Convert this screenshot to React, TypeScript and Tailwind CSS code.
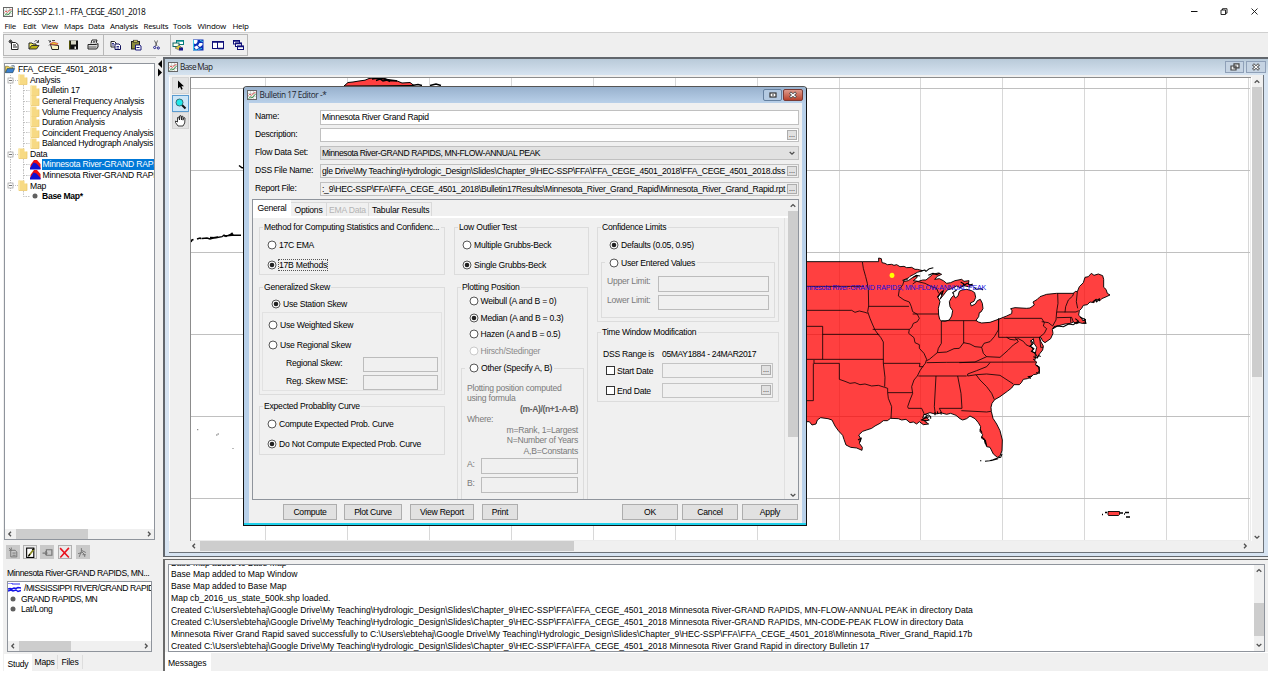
import type { ReactNode } from "react";

/* ---------- shared bits ---------- */

function ChartIcon({ className = "" }: { className?: string }) {
  return (
    <svg viewBox="0 0 10 10" className={`h-[10px] w-[10px] shrink-0 ${className}`}>
      <rect x="0.5" y="0.5" width="9" height="9" fill="#f6f8f6" stroke="#666" />
      <path d="M1 3.500h8M1 6.500h8M3.500 1v8M6.500 1v8" stroke="#bcc4bc" strokeWidth="0.600" />
      <path d="M1.500 8.500L3.500 7l1.500 1 3.500-4" stroke="#2d8a3c" strokeWidth="0.900" fill="none" />
      <path d="M1.500 5.500L3 4l1.500 1.500L6.500 3l2-.5" stroke="#d44" strokeWidth="0.800" fill="none" />
    </svg>
  );
}

function Chevron({ dir }: { dir: "up" | "down" | "left" | "right" }) {
  const d = {
    up: "M1.700 4.800L4 2.600l2.300 2.200",
    down: "M1.700 3L4 5.200l2.300-2.200",
    left: "M5 1.700L2.800 4l2.200 2.300",
    right: "M3 1.700L5.200 4l-2.200 2.300",
  }[dir];
  return (
    <svg viewBox="0 0 8 8" className="h-2 w-2 shrink-0">
      <path d={d} fill="none" stroke="#505050" strokeWidth="1.300" />
    </svg>
  );
}

function Folder() {
  return (
    <svg viewBox="0 0 10 11" className="-mt-px h-[11px] w-[10px] shrink-0">
      <path d="M0.500 0.500h6v3h2.500v7H0.500z" fill="#f7da84" />
      <path d="M0.500 0.500h1.500v10H0.500z" fill="#fbe7a6" />
      <path d="M9 3.500v7H1" fill="none" stroke="#e9c566" strokeWidth="0.700" />
    </svg>
  );
}

function Dot() {
  return (
    <svg viewBox="0 0 6 6" className="h-1.5 w-1.5 shrink-0">
      <circle cx="3" cy="3" r="2.500" fill="#606060" />
    </svg>
  );
}

/* ---------- top bar ---------- */

const MENUS: [string, string][] = [
  ["File", "w-[18.500px]"],
  ["Edit", "w-[18.500px]"],
  ["View", "w-[22.500px]"],
  ["Maps", "w-[24px]"],
  ["Data", "w-[22px]"],
  ["Analysis", "w-[33.500px]"],
  ["Results", "w-[29.500px]"],
  ["Tools", "w-[24.500px]"],
  ["Window", "w-[35px]"],
  ["Help", "w-[20px]"],
];

function ToolIcon({ children, className = "" }: { children: ReactNode; className?: string }) {
  return (
    <svg viewBox="0 0 12 12" className={`h-3 w-3 shrink-0 ${className}`} fill="none" strokeWidth="1">
      {children}
    </svg>
  );
}

function Toolbar() {
  return (
    <div className="flex h-[25px] bg-[#efefef] pt-px">
      <div className="flex h-[22px] w-[101px] items-center gap-[7.800px] border border-[#b8b8b8] pl-[4px]">
        <ToolIcon>
          <path d="M3.500 3.500h4l2.500 2v5h-6.500zM5 6h3M5 8h4" stroke="#222" fill="#fff" />
          <path d="M2.500 0.500v4M0.500 2.500h4M1 1l3 3M4 1l-3 3" stroke="#333" strokeWidth="0.800" />
        </ToolIcon>
        <ToolIcon>
          <path d="M1 10V4h3l1 1h3v2" stroke="#222" fill="#f3ee58" />
          <path d="M1 10l2.500-3.500H11L8.500 10z" stroke="#333" fill="#b8b010" />
          <path d="M6.500 2.500c1-1.500 3-1 3.500.5M10.500 1v2.500H8.500" stroke="#222" strokeWidth="0.800" />
        </ToolIcon>
        <ToolIcon>
          <path d="M2.500 5.500L10.500 6.500V10.500H4z" stroke="#222" fill="#fbf6c4" />
          <path d="M2 5l7 .8 1-1.300-5-1.500z" fill="#e8d030" stroke="#c33" strokeWidth="0.700" />
          <path d="M0.500 1l2 2M2.500 3V1.500M2.500 3H1M2.500 5L1 6.500M4 1.500h3" stroke="#222" strokeWidth="0.800" />
        </ToolIcon>
        <ToolIcon>
          <rect x="2" y="1.500" width="9" height="9" fill="#111" />
          <rect x="4" y="1.500" width="5" height="4" fill="#d9d9c8" />
          <path d="M2.700 2v8" stroke="#6b6b00" strokeWidth="0.900" />
          <rect x="7.500" y="7.500" width="1.500" height="2.500" fill="#eee" />
        </ToolIcon>
        <ToolIcon>
          <path d="M4 4.500L5 1h5L9 4.500" stroke="#222" fill="#fff" />
          <path d="M1 5.500h8.500l1.500-1v3.500l-1.500 2H1z" stroke="#222" fill="#ddd" />
          <path d="M1.500 8h8M6 2.500h2.500M5.500 3.700h2.500" stroke="#222" strokeWidth="0.700" />
        </ToolIcon>
      </div>
      <div className="flex h-[22px] w-[67px] items-center gap-[7.800px] border border-l-0 border-[#b8b8b8] pl-[6px]">
        <ToolIcon>
          <path d="M1 2.500h3.500l1.500 1.500v4H1z" stroke="#222" fill="#fff" />
          <path d="M5 5h4l1.500 1.500v4H5z" stroke="#10105a" fill="#fff" />
          <path d="M6.500 7.500h2.500M6.500 9h2.500M2 4.500h2M2 6h2" stroke="#1a1a7a" strokeWidth="0.900" />
        </ToolIcon>
        <ToolIcon>
          <rect x="1.500" y="2.500" width="8" height="7.500" fill="#8b8a3a" stroke="#222" />
          <rect x="3.500" y="1.200" width="4" height="2" fill="#d9d060" stroke="#222" strokeWidth="0.600" />
          <path d="M5.500 6h4l1.500 1v4H5.500z" stroke="#1a1a7a" fill="#fff" />
          <path d="M6.500 8.500h3" stroke="#1a1a7a" />
        </ToolIcon>
        <ToolIcon>
          <path d="M4.500 1.500l2.500 5.500M7.500 1.500L5.500 7" stroke="#555" strokeWidth="0.900" />
          <circle cx="4.700" cy="8.500" r="1.100" stroke="#1a1a8a" />
          <circle cx="8.300" cy="9" r="1.100" stroke="#1a1a8a" />
        </ToolIcon>
      </div>
      <div className="flex h-[22px] w-[77px] items-center gap-[7.800px] border border-l-0 border-[#b8b8b8] pl-[1px]">
        <ToolIcon>
          <rect x="4.500" y="1.500" width="7" height="4" fill="#fff" stroke="#067a7a" />
          <path d="M4.500 2h7" stroke="#078f8f" strokeWidth="1.500" />
          <rect x="1" y="4" width="6" height="3.500" fill="#ffe" stroke="#0a6a6a" />
          <path d="M3 9l4-3 3 3-3 2z" fill="#d8c840" stroke="#555" strokeWidth="0.600" />
          <path d="M7 8.500h4v3H7z" fill="#16168a" />
        </ToolIcon>
        <ToolIcon>
          <rect x="1" y="0.500" width="10.500" height="11" fill="#0a2fb8" />
          <path d="M1.500 1h4v2l-1.500 2-2.500-.5zM7.500 4h3v2L8 8 6 6.500zM2 8l3-1.500 2 2.500-3 1.500z" fill="#fff" />
          <path d="M1.500 1v10h4M8 1.500l3 1M6 10.500l4-1" stroke="#3cc6e8" />
        </ToolIcon>
        <ToolIcon className="ml-[0.500px]">
          <rect x="0.500" y="2.500" width="5" height="7" fill="#fff" stroke="#10107a" />
          <rect x="5.500" y="2.500" width="6" height="7" fill="#fff" stroke="#10107a" />
          <path d="M0.500 3h11M6 9.500h5.500" stroke="#10107a" strokeWidth="1.600" />
        </ToolIcon>
        <ToolIcon>
          <rect x="1.500" y="1.500" width="6" height="3.500" fill="#fff" stroke="#10107a" />
          <rect x="3.500" y="4" width="6" height="3.500" fill="#fff" stroke="#10107a" />
          <rect x="5.500" y="7" width="6" height="3.500" fill="#fff" stroke="#10107a" />
          <path d="M1.500 2h6M3.500 4.500h6M5.500 7.500h6" stroke="#10107a" strokeWidth="1.300" />
        </ToolIcon>
      </div>
    </div>
  );
}

/* ---------- left side ---------- */

function TreeRow({ depth, kind, children, selected, bold, last }: {
  depth: 0 | 1 | 2;
  kind: "folder" | "data" | "dot" | "root";
  children: string;
  selected?: boolean;
  bold?: boolean;
  last?: boolean;
}) {
  return (
    <div className="flex h-[10.580px] items-center">
      {depth === 1 && (
        <svg viewBox="0 0 13 11" className="h-[11px] w-[13px] shrink-0">
          <path d="M5.500 0v11M8 5.500h5" stroke="#999" strokeWidth="0.600" strokeDasharray="1 1" />
          <rect x="3" y="3" width="5" height="5" fill="#fff" stroke="#999" strokeWidth="0.700" />
          <path d="M4 5.500h3" stroke="#333" strokeWidth="0.700" />
        </svg>
      )}
      {depth === 2 && (
        <svg viewBox="0 0 25 11" className="h-[11px] w-[25px] shrink-0">
          <path d={last ? "M18.500 0v5.500h6" : "M5.500 0v11M18.500 0v11M18.500 5.500h6"} fill="none" stroke="#aaa" strokeWidth="0.700" strokeDasharray="1.500 1" />
        </svg>
      )}
      {kind === "root" && (
        <svg viewBox="0 0 12 10" className="h-[10px] w-[11px] shrink-0">
          <path d="M0.500 9V2h3l1 1h4v2" fill="#f3d25c" stroke="#5a5a20" strokeWidth="0.600" />
          <path d="M0.500 9L2.500 4.500h8L8.500 9z" fill="#3a7fd0" stroke="#134" strokeWidth="0.600" />
          <path d="M7 1.500h3v2" stroke="#246" strokeWidth="0.800" fill="none" />
        </svg>
      )}
      {kind === "folder" && <Folder />}
      {kind === "data" && (
        <svg viewBox="0 0 11 11" className="-mt-px h-[11px] w-[11px] shrink-0">
          <path d="M0.500 10V6L4 1 7 1l3.500 4V10z" fill="#f01010" />
          <path d="M0 10.500V9L3.500 3.500l3 1 4 4.500v1.500z" fill="#1010d0" />
        </svg>
      )}
      {kind === "dot" && <span className="flex w-[10px] justify-center"><Dot /></span>}
      <span
        className={`h-[10.500px] leading-[10.500px] ${kind === "data" ? "ml-px pl-[0.500px]" : "ml-px pl-px"} ${selected ? "bg-[#0078d7] text-white" : ""} ${bold ? "font-bold tracking-[-0.300px]" : ""}`}
      >
        {children}
      </span>
    </div>
  );
}

function HScroll({ thumb, className = "" }: { thumb: string; className?: string }) {
  return (
    <div className={`flex h-[10px] items-center justify-between bg-[#f0f0f0] px-[1px] ${className}`}>
      <div className="flex h-full items-center gap-[2px]">
        <Chevron dir="left" />
        <div className={`h-full bg-[#cdcdcd] ${thumb}`} />
      </div>
      <Chevron dir="right" />
    </div>
  );
}

function MiniButton({ children, off }: { children: ReactNode; off?: boolean }) {
  return (
    <div className={`flex h-[14px] w-[14px] items-center justify-center ${off ? "bg-[#c9c9c9]" : "border border-[#b0b0b0] bg-[#e9e9e9]"}`}>
      <svg viewBox="0 0 10 10" className="h-[11px] w-[11px] shrink-0" fill="none">{children}</svg>
    </div>
  );
}

function LeftPane() {
  return (
    <div className="flex w-[153px] shrink-0 flex-col border-t border-[#c4c4c4] bg-[#f0f0f0] pl-px">
      <div className="mt-[5px] flex h-[477px] w-[151px] flex-col border border-[#8f949c] bg-white">
        <div className="h-[466px] overflow-hidden pt-[0.200px] tracking-[-0.210px]">
          <TreeRow depth={0} kind="root">FFA_CEGE_4501_2018 *</TreeRow>
          <TreeRow depth={1} kind="folder">Analysis</TreeRow>
          <TreeRow depth={2} kind="folder">Bulletin 17</TreeRow>
          <TreeRow depth={2} kind="folder">General Frequency Analysis</TreeRow>
          <TreeRow depth={2} kind="folder">Volume Frequency Analysis</TreeRow>
          <TreeRow depth={2} kind="folder">Duration Analysis</TreeRow>
          <TreeRow depth={2} kind="folder">Coincident Frequency Analysis</TreeRow>
          <TreeRow depth={2} kind="folder">Balanced Hydrograph Analysis</TreeRow>
          <TreeRow depth={1} kind="folder">Data</TreeRow>
          <TreeRow depth={2} kind="data" selected>Minnesota River-GRAND RAPID</TreeRow>
          <TreeRow depth={2} kind="data">Minnesota River-GRAND RAPID</TreeRow>
          <TreeRow depth={1} kind="folder">Map</TreeRow>
          <TreeRow depth={2} kind="dot" bold last>Base Map*</TreeRow>
        </div>
        <HScroll thumb="w-[72px]" />
      </div>
      <div className="mt-[5px] flex h-[14px] gap-[3.200px] pl-[2px]">
        <MiniButton off>
          <path d="M2.500 3h4l1.500 1.500V9h-5.500zM4 5.500h3M4 7.500h3M1 1l2 2M3 .5v2M1 3h2" stroke="#777" strokeWidth="0.900" />
        </MiniButton>
        <MiniButton>
          <rect x="1.500" y="1" width="6.500" height="8.500" fill="#fff" stroke="#000" />
          <path d="M3.500 8L8 2" stroke="#8a8a20" strokeWidth="1.600" />
          <path d="M3 8.500l1.500-2M6.500 2.500l2-1" stroke="#000" />
        </MiniButton>
        <MiniButton off>
          <path d="M4 2.500h5v5H4zM0.500 5.500h4M3 4l1.500 1.500L3 7" stroke="#777" strokeWidth="1.100" />
        </MiniButton>
        <MiniButton>
          <path d="M1 1l8 8.500M9 .8L1.200 9.500" stroke="#e8101c" strokeWidth="1.400" />
        </MiniButton>
        <div className="ml-[1px]">
          <MiniButton off>
            <path d="M4 1v3M4 4L2 9M4 4l3 3v2M4 3l4 2M1 6l4-1M5 7h3" stroke="#777" strokeWidth="0.900" />
          </MiniButton>
        </div>
      </div>
      <div className="mt-[5px] h-px w-[151px] bg-[#a5a5a5]" />
      <div className="mt-[4px] h-[11px] pl-[3px] leading-[11px] tracking-[-0.380px]">Minnesota River-GRAND RAPIDS, MN...</div>
      <div className="mt-[2px] ml-[3px] flex h-[71px] w-[145px] flex-col border border-[#8f949c] bg-white">
        <div className="h-[59px] overflow-hidden pt-[1px]">
          <div className="flex h-[10.600px] items-center">
            <svg viewBox="0 0 13 10" className="h-[10px] w-[13px] shrink-0">
              <path d="M0 0h4v1h8" stroke="#2a2af0" strokeWidth="1" fill="none" />
              <path d="M0 6l2-.5 2 .5 2-1 2 .5 2-1 3 .5M0 8l3-1 2 1 3-1 2 1.500 3-1" stroke="#1414e8" strokeWidth="1.400" fill="none" />
            </svg>
            <span className="ml-[3px] tracking-[-0.480px]">/MISSISSIPPI RIVER/GRAND RAPID</span>
          </div>
          <div className="flex h-[10.600px] items-center pl-[2px]">
            <Dot />
            <span className="ml-[5px] tracking-[-0.450px]">GRAND RAPIDS, MN</span>
          </div>
          <div className="flex h-[10.600px] items-center pl-[2px]">
            <Dot />
            <span className="ml-[5px]">Lat/Long</span>
          </div>
        </div>
        <HScroll thumb="w-[52px]" />
      </div>
      <div className="mt-[2px] flex h-[18px] items-start">
        <div className="h-[18px] w-[28px] bg-white pt-[4px] text-center leading-3">Study</div>
        <div className="mt-px h-[14px] w-[26px] border-r border-[#ddd] text-center leading-[14px]">Maps</div>
        <div className="mt-px h-[14px] w-[25px] border-r border-[#ddd] text-center leading-[14px]">Files</div>
      </div>
    </div>
  );
}

/* ---------- map ---------- */

const V_LINES = [265.5, 347.5, 429.5, 511.5, 593.5, 675.5, 757.5, 839.5, 920.5, 1002.5, 1084.5, 1166.5, 1248.5];
const H_LINES = [88.5, 170.5, 252.5, 334.5, 416.5, 498.5];

const COAST =
  "M-20,65 L187,65 236,65 236,54 244,56 246,68 255,70 262,74 275,73 282,76 290,74 300,80 312,79 320,83 335,82 345,88 352,88 368,92 352,97 340,104 330,109 325,114 308,121 " +
  "313,124 325,122 333,116 342,110 352,108 350,114 340,122 355,124 368,120 378,120 390,110 398,103 415,99 425,103 412,109 404,118 418,116 430,122 440,130 452,128 465,122 485,118 492,124 507,122 505,132 518,136 " +
  "505,140 492,137 480,143 470,138 455,146 442,150 436,158 428,168 420,178 428,160 420,162 414,172 420,185 415,205 416,225 419,238 424,243 435,244 448,240 455,228 458,212 450,200 448,185 455,172 462,166 466,174 474,168 478,154 486,150 500,148 515,152 524,158 527,172 522,184 511,189 514,198 526,192 532,182 541,178 547,190 549,206 543,216 538,218 536,230 528,241 " +
  "535,246 545,249 570,247 595,238 620,228 635,221 636,212 632,206 645,203 680,205 690,204 703,195 699,186 712,178 720,170 740,163 770,160 820,160 826,154 832,155 838,140 850,128 855,112 865,110 874,100 882,106 895,102 908,107 911,118 911,142 918,148 922,160 930,165 915,172 905,176 900,182 890,178 882,188 870,186 862,194 850,196 845,205 838,212 836,226 845,234 848,242 857,240 854,236 857,250 846,250 836,247 830,251 820,246 812,250 795,252 780,256 762,260 " +
  "757,268 759,280 752,296 735,308 727,302 724,294 718,292 722,304 730,318 728,330 720,340 712,352 706,340 710,322 702,310 700,296 692,304 697,314 690,318 700,328 696,334 706,342 706,358 700,358 710,366 706,374 714,378 718,392 712,402 700,404 692,412 682,416 670,418 664,428 658,434 642,434 635,444 622,454 600,470 584,479 576,490 573,502 574,514 579,535 590,552 600,572 607,600 606,632 600,648 592,652 580,642 570,622 560,620 553,600 544,594 548,584 540,574 542,560 535,548 525,536 510,528 500,536 488,540 480,536 468,526 452,520 440,523 425,519 405,522 390,518 372,524 368,534 380,534 388,540 374,544 386,552 370,554 358,545 350,552 340,546 330,548 318,538 305,540 295,536 272,535 262,542 250,542 240,550 225,558 215,565 200,570 188,574 176,585 182,596 178,610 187,622 186,631 170,624 152,622 138,615 132,598 128,586 115,572 105,558 96,540 84,536 62,533 52,540 48,552 36,555 28,545 -20,546 Z";

const STATES = [
  "M-20,139H192M-20,211H155L165,217 178,213 195,217 203,220",
  "M187,65L190,85 197,110 202,130 205,150 206,198 203,215 210,235 217,252 225,270 235,284 242,292 250,306",
  "M206,199H327M325,117L313,120 308,135 298,148 295,168 312,180 328,186 334,200 338,215 352,223 358,235 352,245 340,250 335,262 328,268H218",
  "M338,132L350,124 375,130 395,140 410,145 416,160M338,222H416",
  "M328,268L326,280 342,293 345,308 358,314 358,325 372,340 380,358 376,370 368,380 360,392 352,408 342,420 335,440 338,460 330,480 323,500 325,505H365L372,520",
  "M424,243V310L415,325 412,338 400,348 388,358 380,362",
  "M491,242V310M424,242H530M412,338L440,336 462,326 478,325 491,308 510,312 525,320 545,322 552,310 570,305 583,290 595,270 596,235",
  "M611,235H725L733,248 730,258 740,266 733,280 718,292H596V235",
  "M545,322L550,340 560,350 525,366M560,350L600,352 625,330 640,315 655,305 645,292M620,292L630,298 645,300 655,296 670,304 678,314 690,320",
  "M380,368L440,367 708,366M355,408L500,408M525,366L478,368M570,368L560,380 530,392 503,402V408L530,404",
  "M530,404L560,402 600,406 640,432M528,404L540,420 560,440 575,460 583,479",
  "M408,408L403,500 406,522M473,408L483,460 486,505H418L425,519M484,512L560,516 573,514",
  "M-20,259H68V358M68,283H238M250,306V370M-20,358H250M250,370L255,412 254,440",
  "M250,370H360L358,380 370,380M42,360V370H118V418L135,424 150,430 165,428 180,434 195,432 215,438 235,436 254,442 263,445V458H337M40,370V482H-20",
  "M263,458L265,475 275,500 273,535M719,292L722,322H730M773,160L774,190 770,215 768,240 758,258 745,248 725,245",
  "M770,216H828L836,212M771,233L815,232 820,246M812,232V248M795,217L797,200 805,180 818,168 822,158M832,155L829,185 833,205",
];

const NOISE = [
  "M362,94l12,-4 4,4 10,-8 12,-3M385,106l14,-6 12,4 8,-5M340,112l8,-6 12,2",
  "M482,126l10,6 -4,6 14,-8 8,6 8,-4M522,142l8,6 14,-2 5,4M470,150l-12,8 4,6",
  "M692,300l8,10 -10,8 12,8 -8,8 14,6M700,350l12,4 4,-8 6,4M708,376l10,6 0,18 -10,-2M696,408l-12,2 8,6",
  "M758,266l14,-8 18,2 16,-8 14,2 8,-5M826,236l10,8 -12,6 14,-2M840,232l14,6 4,12 -8,-2",
  "M370,522l12,4 -8,8 14,-4M376,534l-12,6 16,2M384,524l8,6v6M540,568l6,10M544,590l10,8 2,14M556,600l4,18",
  "M555,664l14,-2 10,-3 12,-4M572,662l22,-6M540,662l4,0M592,654l10,-2 4,-10",
  "M878,186l10,-8 2,8 8,-10 0,8M412,172l10,-14 8,-6 -6,14M174,600l10,-6 -4,12",
  "M405,516v10M412,514l2,8M422,516l2,8",
];

function MapCanvas() {
  return (
    <svg viewBox="190 77 1062 464" className="h-[464px] w-[1062px] shrink-0 bg-white">
      {V_LINES.map((x) => <path key={x} d={`M${x} 77V540`} stroke="#d8d8d8" />)}
      {H_LINES.map((y) => <path key={y} d={`M190 ${y}H1250`} stroke="#c0c0c0" />)}
      <g transform="translate(800 240) scale(0.33333)" stroke="#000" strokeWidth="2.800" strokeLinejoin="round">
        <path d={COAST} fill="#ff0000" fillOpacity="0.750" />
        {STATES.map((d) => <path key={d} d={d} fill="none" strokeOpacity="0.850" />)}
        {NOISE.map((d) => <path key={d} d={d} fill="none" strokeWidth="3.200" />)}
      </g>
      <path d="M344 86l4-3.500 5-.5 6-1 6-.8 4-1.700 8-1 6 .5 5 1.500 8 1 6 2.500 8-.5 4 3z" fill="#ff4040" stroke="#000" />
      <path d="M372 79l6-1 6 1 5 1.500 8 .5M376 80.500l4-1.500 3 2 4-1 3 1.500M412 85.500l6-1 4 1M430 85.500l6-1.500 5 1.500" stroke="#000" strokeWidth="1.400" fill="none" />
      <path d="M191 242l1-2 1.500-.5M197 239l3-1 1.500.8M202 238.500l5-.5 3 1 5-1.500 3-.5" stroke="#000" strokeWidth="1.600" fill="none" />
      <path d="M210 237.500l6 .2 6-1 2-1.500 2 1.200 4-1.700 2-1.500 1 1.500 -2 .5M224 236l8-.8H241" stroke="#000" strokeWidth="1.400" fill="none" />
      <path d="M239 165.500l3 2.300h2" stroke="#000" strokeWidth="1.500" fill="none" />
      <path d="M197 429.700h1.300M216 435h1.500M217.500 434h1.500M232.500 448.500h1" stroke="#777" strokeWidth="1" />
      <path d="M1108 511.500h11.500v3l-1 1h-10l-.5-1z" fill="#ff4040" stroke="#000" strokeWidth="0.900" />
      <path d="M1102 514.500h1M1105 512.500h2M1120 513h3M1125 512.500h4M1126 517h4M1124 514h1" stroke="#000" strokeWidth="1.300" />
      <ellipse cx="892" cy="275.300" rx="2.400" ry="2.600" fill="#ffff00" />
      <path d="M190 77.500h1061M190.500 77v464" stroke="#8c8c8c" fill="none" />
      <path d="M1250.500 78v463M191 540.500h1060" stroke="#ececec" fill="none" />
    </svg>
  );
}

function MapTool({ active, children }: { active?: boolean; children: ReactNode }) {
  return (
    <div className={`flex h-[17px] w-[17px] items-center justify-center border ${active ? "border-[#5a9bd0] bg-[#cde6f7]" : "border-[#d4d4d4] bg-[#e3e3e3]"}`}>
      <svg viewBox="0 0 13 13" className="h-[13px] w-[13px] shrink-0">{children}</svg>
    </div>
  );
}

function BaseMapFrame() {
  return (
    <div className="flex h-[499px] flex-col border-t-2 border-l-2 border-[#62676d] bg-[#d7e4f2]">
      <div className="flex h-[16px] shrink-0 items-center bg-linear-to-b from-[#b9cad9] to-[#d6e3f0] pr-[2px] pl-[3px]">
        <ChartIcon className="h-[9px] w-[9px]" />
        <span className="ml-[2px] font-['Open_Sans',sans-serif] text-[8.200px] tracking-[-0.620px] text-[#222]">Base Map</span>
        <div className="ml-auto flex gap-[2px]">
          <div className="flex h-[12px] w-[19px] items-center justify-center border border-[#8fa0b8] bg-[#c5d3e2]">
            <svg viewBox="0 0 10 8" className="h-2 w-[10px]"><path d="M4 .8h5v4H4zM1 3h5v4H1z" fill="#eee" stroke="#444" strokeWidth="1.200" /></svg>
          </div>
          <div className="flex h-[12px] w-[20px] items-center justify-center border border-[#8fa0b8] bg-[#c5d3e2]">
            <svg viewBox="0 0 10 8" className="h-2 w-[10px]"><path d="M2 1.200l6 5.600M8 1.200L2 6.800" stroke="#444" strokeWidth="2.800" /><path d="M2.500 1.600l5 4.800M7.500 1.600l-5 4.800" stroke="#fff" strokeWidth="1.200" /></svg>
          </div>
        </div>
      </div>
      <div className="ml-[4px] flex h-[478px] w-[1095px] flex-col border-r border-b border-[#6d737a] bg-[#f0f0f0]">
        <div className="flex h-[466px] pt-[2px]">
          <div className="flex w-[21px] shrink-0 flex-col gap-[0.700px] border-l border-white pl-[2px]">
            <MapTool>
              <path d="M4 1.500v8l2-1.800 1.300 3 1.400-.7-1.300-2.800h2.600z" fill="#000" />
            </MapTool>
            <MapTool active>
              <path d="M7.500 7.500l4 4" stroke="#111" strokeWidth="2" />
              <circle cx="5.500" cy="5.500" r="3.500" fill="#20e8e8" stroke="#33606a" strokeWidth="0.900" />
            </MapTool>
            <MapTool>
              <path d="M4 12L1.500 8.500l0-1.500 2 1V3.500l1.200-.5L5.500 6V2l1.300-.5L7.500 6V2.500l1.300-.3.200 4 .8-2.700 1.200.500-.3 5L9 12z" fill="#fff" stroke="#111" strokeWidth="0.800" />
            </MapTool>
          </div>
          <MapCanvas />
          <div className="flex h-[464px] w-[10px] flex-col items-center bg-[#f0f0f0] pt-px">
            <Chevron dir="up" />
            <div className="mt-px h-[290px] w-full bg-[#cdcdcd]" />
            <div className="grow" />
            <Chevron dir="down" />
          </div>
        </div>
        <HScroll thumb="w-[374px]" className="ml-[20px] w-[1061px]" />
      </div>
    </div>
  );
}

const MESSAGES = [
  "Base Map added to Base Map",
  "Base Map added to Map Window",
  "Base Map added to Base Map",
  "Map cb_2016_us_state_500k.shp loaded.",
  "Created C:\\Users\\ebtehaj\\Google Drive\\My Teaching\\Hydrologic_Design\\Slides\\Chapter_9\\HEC-SSP\\FFA\\FFA_CEGE_4501_2018 Minnesota River-GRAND RAPIDS, MN-FLOW-ANNUAL PEAK in directory Data",
  "Created C:\\Users\\ebtehaj\\Google Drive\\My Teaching\\Hydrologic_Design\\Slides\\Chapter_9\\HEC-SSP\\FFA\\FFA_CEGE_4501_2018 Minnesota River-GRAND RAPIDS, MN-CODE-PEAK FLOW in directory Data",
  "Minnesota River Grand Rapid saved successfully to C:\\Users\\ebtehaj\\Google Drive\\My Teaching\\Hydrologic_Design\\Slides\\Chapter_9\\HEC-SSP\\FFA\\FFA_CEGE_4501_2018\\Minnesota_River_Grand_Rapid.17b",
  "Created C:\\Users\\ebtehaj\\Google Drive\\My Teaching\\Hydrologic_Design\\Slides\\Chapter_9\\HEC-SSP\\FFA\\FFA_CEGE_4501_2018 Minnesota River Grand Rapid in directory Bulletin 17",
];

function MessagePane() {
  return (
    <div className="flex h-[112px] flex-col border-t border-l-2 border-[#6a6a6a] bg-[#f0f0f0]">
      <div className="mt-[4px] ml-[3px] flex h-[88px] w-[1097px] border border-[#8f949c] bg-white">
        <div className="h-full grow overflow-hidden pl-[2px] text-[8.600px] tracking-[-0.005px]">
          <div className="-mt-[7.400px]">
            {MESSAGES.map((text, i) => (
              <div key={i} className="h-[11.850px] leading-[11.850px]">{text}</div>
            ))}
          </div>
        </div>
        <div className="flex w-[10px] flex-col items-center bg-[#f0f0f0] py-[2px]">
          <Chevron dir="up" />
          <div className="mt-[28px] h-[33px] w-full bg-[#cdcdcd]" />
          <div className="grow" />
          <Chevron dir="down" />
        </div>
      </div>
      <div className="h-px bg-white" />
      <div className="h-[18px] w-[46px] bg-white pt-[3px] pl-[3px] leading-[14px] tracking-[-0.080px]">Messages</div>
    </div>
  );
}

/* ---------- editor dialog ---------- */

function Radio({ label, on, dim, focus, className = "" }: {
  label: string; on?: boolean; dim?: boolean; focus?: boolean; className?: string;
}) {
  return (
    <div className={`flex h-[10px] items-center ${dim ? "text-[#8a8a8a]" : ""} ${className}`}>
      <svg viewBox="0 0 10 10" className="h-[10px] w-[10px] shrink-0">
        <circle cx="5" cy="5" r="4" fill="#fff" stroke={dim ? "#c4c4c4" : "#444"} strokeWidth="0.900" />
        {on && <circle cx="5" cy="5" r="2.300" fill="#222" />}
      </svg>
      <span className={`ml-[2px] leading-[10px] ${focus ? "outline outline-dotted outline-[#555]" : ""}`}>{label}</span>
    </div>
  );
}

function Group({ title, className = "", children }: { title: ReactNode; className?: string; children: ReactNode }) {
  return (
    <fieldset className={`min-w-0 border border-[#dcdcdc] ${className}`}>
      <legend className="ml-[2.500px] h-[10px] px-[1.500px] leading-[10px]">{title}</legend>
      {children}
    </fieldset>
  );
}

function Box({ className = "", children }: { className?: string; children?: ReactNode }) {
  return <div className={`flex items-center justify-end border border-[#bcbcbc] ${className}`}>{children}</div>;
}

function Dots() {
  return <div className="mr-[1px] h-[10px] w-[10px] shrink-0 border border-[#adadad] bg-[#e1e1e1] text-center text-[7px] leading-[7px] tracking-normal">...</div>;
}

function FieldRow({ label, children, className = "" }: { label: string; children: ReactNode; className?: string }) {
  return (
    <div className="flex h-[17.900px]">
      <div className="w-[65px] shrink-0 leading-[12px]">{label}</div>
      <div className={`flex h-[14.500px] w-[479px] items-center justify-between border border-[#c0c0c0] pl-[1px] ${className}`}>{children}</div>
    </div>
  );
}

function Button({ children, className }: { children: string; className: string }) {
  return <div className={`h-[16px] border border-[#adadad] bg-[#e1e1e1] text-center leading-[15px] ${className}`}>{children}</div>;
}

function GeneralTab() {
  return (
    <div className="flex h-[281px] items-start overflow-hidden pl-[6px]">
      <div className="flex w-[186px] flex-col pt-[4px]">
        <Group title="Method for Computing Statistics and Confidenc..." className="h-[53px]">
          <Radio label="17C EMA" className="mt-[7.500px] ml-[7px]" />
          <Radio label="17B Methods" on focus className="mt-[10px] ml-[7px]" />
        </Group>
        <Group title="Generalized Skew" className="mt-[7px] h-[113px]">
          <Radio label="Use Station Skew" on className="mt-[7px] ml-[11px]" />
          <div className="mt-[3px] ml-[2px] h-[79px] w-[180px] border border-[#e2e2e2]">
            <Radio label="Use Weighted Skew" className="mt-[7px] ml-[5px]" />
            <Radio label="Use Regional Skew" className="mt-[10px] ml-[5px]" />
            <div className="mt-[7px] flex h-[15px] items-center">
              <span className="-mt-[4px] ml-[23px] w-[77px]">Regional Skew:</span>
              <Box className="h-[15px] w-[75px]" />
            </div>
            <div className="mt-[3px] flex h-[15px] items-center">
              <span className="-mt-[4px] ml-[23px] w-[77px]">Reg. Skew MSE:</span>
              <Box className="h-[15px] w-[75px]" />
            </div>
          </div>
        </Group>
        <Group title="Expected Probablity Curve" className="mt-[6px] h-[54px]">
          <Radio label="Compute Expected Prob. Curve" className="mt-[8px] ml-[7px]" />
          <Radio label="Do Not Compute Expected Prob. Curve" on className="mt-[10px] ml-[7px]" />
        </Group>
      </div>
      <div className="ml-[9px] flex w-[135px] flex-col pt-[4px]">
        <Group title="Low Outlier Test" className="h-[53px]">
          <Radio label="Multiple Grubbs-Beck" className="mt-[7.500px] ml-[7px]" />
          <Radio label="Single Grubbs-Beck" on className="mt-[10px] ml-[7px]" />
        </Group>
        <Group title="Plotting Position" className="mt-[7px] ml-[3px] h-[260px] w-[131px]">
          <Radio label="Weibull (A and B = 0)" className="mt-[4px] ml-[10.500px]" />
          <Radio label="Median (A and B = 0.3)" on className="mt-[6.500px] ml-[10.500px]" />
          <Radio label="Hazen (A and B = 0.5)" className="mt-[6.500px] ml-[10.500px]" />
          <Radio label="Hirsch/Stedinger" dim className="mt-[6.500px] ml-[10.500px]" />
          <Group title={<Radio label="Other (Specify A, B)" className="ml-[3px] text-black" />} className="mt-[7.500px] ml-[3px] h-[170px] w-[123px] text-[#7a7a7a]">
            <div className="mt-[9.500px] w-[111px] pl-[5px] leading-[10.600px]">
              <div>Plotting position computed</div>
              <div>using formula</div>
            </div>
            <div className="flex w-[116px] flex-col items-end leading-[10.600px]">
              <div className="font-bold tracking-[-0.380px] text-[#606060]">(m-A)/(n+1-A-B)</div>
              <div className="self-start pl-[5px]">Where:</div>
              <div>m=Rank, 1=Largest</div>
              <div>N=Number of Years</div>
              <div>A,B=Constants</div>
            </div>
            <div className="mt-[1.500px] flex h-[16px] w-[116px] justify-between pl-[5px] leading-[12px]">
              <span>A:</span>
              <Box className="h-[16px] w-[97px]" />
            </div>
            <div className="mt-[3px] flex h-[16px] w-[116px] justify-between pl-[5px] leading-[12px]">
              <span>B:</span>
              <Box className="h-[16px] w-[97px]" />
            </div>
          </Group>
        </Group>
      </div>
      <div className="ml-[8px] flex w-[182px] flex-col pt-[4px]">
        <Group title="Confidence Limits" className="h-[100px]">
          <Radio label="Defaults (0.05, 0.95)" on className="mt-[7.500px] ml-[11px]" />
          <Group title={<Radio label="User Entered Values" className="ml-[3px]" />} className="mt-[8px] ml-[3px] h-[60px] w-[174px]">
            <div className="mt-[8px] flex h-[16px] items-start pl-[5px] leading-[11px] text-[#7a7a7a]">
              <span className="w-[51px]">Upper Limit:</span>
              <Box className="h-[16px] w-[111px] border-[#adb0b5]" />
            </div>
            <div className="mt-[3px] flex h-[15px] items-start pl-[5px] leading-[11px] text-[#7a7a7a]">
              <span className="w-[51px]">Lower Limit:</span>
              <Box className="h-[15px] w-[111px] border-[#adb0b5]" />
            </div>
          </Group>
        </Group>
        <Group title="Time Window Modification" className="mt-[5px] h-[75px]">
          <div className="mt-[11.500px] flex h-[11px] items-center pl-[5px]">
            <span className="w-[59px]">DSS Range is</span>
            <span className="tracking-[-0.380px]">05MAY1884 - 24MAR2017</span>
          </div>
          <div className="mt-[2.500px] flex h-[16px] items-center pl-[8px]">
            <div className="mt-px h-[9px] w-[9px] border border-[#333] bg-white" />
            <span className="mt-px ml-[2px] w-[45px]">Start Date</span>
            <Box className="h-[15px] w-[111px] border-[#c4c4c4]"><Dots /></Box>
          </div>
          <div className="mt-[4px] flex h-[16px] items-center pl-[8px]">
            <div className="mt-px h-[9px] w-[9px] border border-[#333] bg-white" />
            <span className="mt-px ml-[2px] w-[45px]">End Date</span>
            <Box className="h-[15px] w-[111px] border-[#c4c4c4]"><Dots /></Box>
          </div>
        </Group>
      </div>
      <div className="ml-[5px] h-full w-px bg-[#e0e0e0]" />
    </div>
  );
}

function EditorDialog() {
  return (
    <div className="absolute top-[86px] left-[243px] flex h-[440px] w-[564px] flex-col overflow-hidden rounded-t-[4px] border border-[#111] border-t-[#555] bg-[#b9d1ea]">
      <div className="flex h-[16px] shrink-0 items-center bg-linear-to-b from-[#98b1cd] to-[#b9d0e9] pr-[3px] pl-[3px]">
        <ChartIcon />
        <span className="ml-[2.500px] font-['Open_Sans',sans-serif] text-[8.300px] tracking-[-0.420px] text-[#1c2430]">Bulletin 17 Editor -*</span>
        <div className="ml-auto flex gap-[1px]">
          <div className="flex h-[12px] w-[19px] items-center justify-center rounded-[2px] border border-[#65809f] bg-[#b4cae2]">
            <svg viewBox="0 0 8 6" className="h-1.5 w-2"><rect x="1" y="1" width="6" height="4" fill="#fff" stroke="#333" strokeWidth="1.200" /><path d="M3 3h2" stroke="#333" /></svg>
          </div>
          <div className="flex h-[12px] w-[20px] items-center justify-center rounded-[2px] border border-[#7a3a34] bg-linear-to-b from-[#dd9a8c] to-[#b8402a]">
            <svg viewBox="0 0 10 8" className="h-2 w-[10px]"><path d="M2 1.500l6 5M8 1.500l-6 5" stroke="#444" strokeWidth="2.800" /><path d="M2.500 2l5 4M7.500 2l-5 4" stroke="#fff" strokeWidth="1.400" /></svg>
          </div>
        </div>
      </div>
      <div className="ml-[5px] flex h-[420px] w-[553px] flex-col bg-[#f0f0f0]">
        <div className="h-[96px] pt-[7px] pl-[6px]">
          <FieldRow label="Name:" className="bg-white">Minnesota River Grand Rapid</FieldRow>
          <FieldRow label="Description:" className="bg-white"><span /><Dots /></FieldRow>
          <FieldRow label="Flow Data Set:" className="bg-[#e1e1e1]">
            <span className="tracking-[-0.420px]">Minnesota River-GRAND RAPIDS, MN-FLOW-ANNUAL PEAK</span>
            <span className="mr-[2px] flex"><Chevron dir="down" /></span>
          </FieldRow>
          <FieldRow label="DSS File Name:">
            <span className="tracking-[-0.263px]">gle Drive\My Teaching\Hydrologic_Design\Slides\Chapter_9\HEC-SSP\FFA\FFA_CEGE_4501_2018\FFA_CEGE_4501_2018.dss</span>
            <Dots />
          </FieldRow>
          <FieldRow label="Report File:">
            <span className="tracking-[-0.263px]">:_9\HEC-SSP\FFA\FFA_CEGE_4501_2018\Bulletin17Results\Minnesota_River_Grand_Rapid\Minnesota_River_Grand_Rapid.rpt</span>
            <Dots />
          </FieldRow>
        </div>
        <div className="ml-[3px] flex h-[301px] w-[547px] border border-[#8f949c]">
          <div className="w-[535px] shrink-0">
            <div className="flex h-[16px] items-end">
              <div className="h-[16px] w-[38px] bg-white text-center leading-[17px]">General</div>
              <div className="h-[14px] w-[36px] border-t border-r border-[#d9d9d9] text-center leading-[14px]">Options</div>
              <div className="h-[14px] w-[42px] border-t border-r border-[#d9d9d9] text-center leading-[14px] text-[#b4b4b4]">EMA Data</div>
              <div className="h-[14px] w-[63px] border-t border-r border-[#d9d9d9] pl-[3px] leading-[14px] tracking-[-0.120px]">Tabular Results</div>
            </div>
            <div className="h-[2px] bg-white" />
            <GeneralTab />
          </div>
          <div className="flex w-[10px] flex-col items-center bg-[#f0f0f0] pt-[2px]">
            <Chevron dir="up" />
            <div className="mt-[1px] h-[226px] w-full bg-[#cdcdcd]" />
            <div className="grow" />
            <Chevron dir="down" />
          </div>
        </div>
        <div className="mt-[4px] flex pl-[34px]">
          <Button className="w-[54px]">Compute</Button>
          <Button className="ml-[7px] w-[58px]">Plot Curve</Button>
          <Button className="ml-[8px] w-[64px]">View Report</Button>
          <Button className="ml-[8px] w-[36px]">Print</Button>
          <Button className="ml-[104px] w-[56px]">OK</Button>
          <Button className="ml-[4px] w-[56px]">Cancel</Button>
          <Button className="ml-[4px] w-[56px]">Apply</Button>
        </div>
      </div>
      <div className="mt-auto h-[2px] shrink-0 bg-[#1fd0ea]" />
    </div>
  );
}

/* ---------- window ---------- */

export default function App() {
  return (
    <div className="relative flex h-[674px] w-[1268px] flex-col overflow-hidden bg-white pl-[3px] font-['Liberation_Sans',Arial,sans-serif] text-[8.600px] leading-[10px] tracking-[-0.240px] whitespace-nowrap text-black">
      <div className="flex h-[20px] items-center pt-[4px] font-['Open_Sans',sans-serif]">
        <ChartIcon />
        <span className="ml-[4px] text-[8.400px] tracking-[-0.490px]">HEC-SSP 2.1.1 - FFA_CEGE_4501_2018</span>
        <svg viewBox="0 0 72 10" className="mr-[6px] ml-auto h-[10px] w-[72px]" fill="none" stroke="#111">
          <path d="M1 4.500h6.500" />
          <path d="M31 3h4.500v4.500H31zM32.500 3v-1.300H37v4.500h-1.500M61.500 1.500l6 6M67.500 1.500l-6 6" strokeWidth="0.900" />
        </svg>
      </div>
      <div className="flex h-[12px] items-center pl-[1.500px] font-['Open_Sans',sans-serif] text-[8px]">
        {MENUS.map(([name, w]) => <span key={name} className={`shrink-0 tracking-[-0.300px] ${w}`}>{name}</span>)}
      </div>
      <div className="h-px shrink-0 bg-[#cfcfcf]" />
      <Toolbar />
      <div className="-mt-px flex h-[614px]">
        <LeftPane />
        <div className="flex w-[7px] shrink-0 flex-col items-end bg-[#f0f0f0] pt-[2px]">
          <svg viewBox="0 0 6 18" className="h-[18px] w-[6px]">
            <path d="M5 1v8L1 5zM1 9.500v8l4-4z" fill="#000" />
          </svg>
        </div>
        <div className="w-[1105px] shrink-0 bg-[#f0f0f0]">
          <BaseMapFrame />
          <div className="h-px bg-[#62676d]" />
          <div className="h-[2px]" />
          <MessagePane />
        </div>
      </div>
      <div className="absolute top-[283px] left-[807px] text-[7px] leading-[9px] tracking-[-0.170px] text-[#1010e0]">nnesota River-GRAND RAPIDS, MN-FLOW-ANNUAL PEAK</div>
      <EditorDialog />
    </div>
  );
}
